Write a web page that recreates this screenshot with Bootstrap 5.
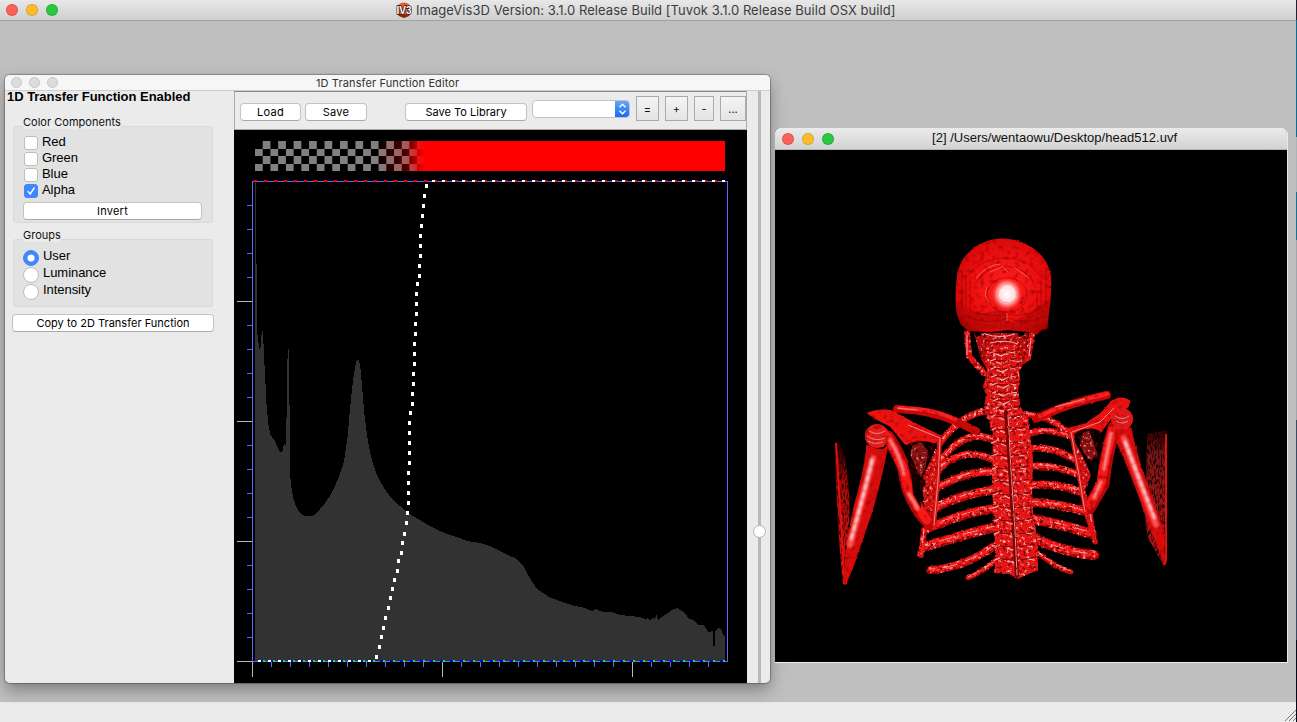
<!DOCTYPE html>
<html lang="en">
<head>
<meta charset="utf-8">
<title>ImageVis3D</title>
<link href="https://cdn.jsdelivr.net/npm/bootstrap@5.3.0/dist/css/bootstrap.min.css" rel="stylesheet">
<style>
body{height:722px;overflow:hidden;background:#bfbfbf;color:#111;font-family:Inter,sans-serif;font-size:11px;line-height:14px;cursor:default}
svg{display:block}
.appbar{height:21px;background:linear-gradient(#e8e8e8,#cfcfcf);border-bottom:1px solid #a2a2a2;padding-left:6px;font-size:13px;color:#3c3c3c}
.apptitle{left:396px;top:2px;line-height:17px;white-space:nowrap}
.apptitle span{letter-spacing:.05px}
.lamps i{display:block;width:12px;height:12px;border-radius:50%;border:1px solid #0002}
.lamps i:nth-child(1){background:#fe5f57}.lamps i:nth-child(2){background:#febc2e}.lamps i:nth-child(3){background:#28c840}
.lamps{gap:8px}
.lamps.off{gap:7px}
.lamps.off i{width:11px;height:11px;background:#dcdcdc;border-color:#c5c5c5}
.desk{height:681px}
.editor{left:5px;top:54px;width:765px;height:608px;border-radius:5px;overflow:hidden;background:#ebebeb}
.shade{left:5px;top:54px;width:765px;height:608px;border-radius:5px;box-shadow:0 0 1px 1px #0004,0 7px 16px #0005}
.edbar{height:16px;background:#f6f6f6;border-bottom:1px solid #cdcdcd;padding-left:6px}
.edbar b{left:311px;top:1px;font-weight:400;color:#333;letter-spacing:.12px}
.side{width:229px;padding:0 21px 0 8px}
.heavy{font:bold 13px/13px "Liberation Sans",sans-serif;margin:-1px 0 1px -6px;letter-spacing:-.03px;white-space:nowrap;color:#000}
.legend-txt{margin-left:10px;letter-spacing:.02px;line-height:15px;height:11px;position:relative;z-index:1}
.legend-txt span{background:#ebebeb}
.groupbox{background:#e2e2e2;border:1px solid #d9d9d9;border-radius:3px;padding:0 11px 0 10px}
.opt{height:16px;font:13px/15px "Liberation Sans",sans-serif;gap:4px;letter-spacing:-.05px;color:#000}
.opt.r{height:17px}
.opt label{position:relative;top:-2px}
.form-check-input{margin:0;width:14px;height:14px;border:1px solid #bdbdbd;background-color:#fff;flex:none}
.form-check-input[type=checkbox]{border-radius:3px}
.form-check-input[type=radio]{width:16px;height:16px}
.form-check-input:checked{background-color:#3f87fd;border-color:#3f87fd}
.form-check-input:checked[type=checkbox]{background-image:url("data:image/svg+xml,%3Csvg xmlns='http://www.w3.org/2000/svg' viewBox='0 0 14 14'%3E%3Cpath d='M3.500 7.500l2.500 3 4.700-7' fill='none' stroke='%23fff' stroke-width='1.600' stroke-linecap='round'/%3E%3C/svg%3E")}
.mbtn{height:18px;padding:0;font-size:11px;line-height:16px;background:#fff;border:1px solid #c3c3c3;border-bottom-color:#aaa;border-radius:4px;color:#000;letter-spacing:.24px}
.mbtn.tight{letter-spacing:.02px}
.tools{height:39px;border:1px solid #aaa;border-top:1px solid #8a8a8a;padding-left:5px}
.tbtn{height:25px;padding:0;font-size:11px;line-height:22px;background:linear-gradient(#f4f4f4,#e4e4e4);border:1px solid #aaa;border-radius:0;color:#111}
.combo{width:98px;height:18px;background:#fff;border:1px solid #c3c3c3;border-radius:4px;overflow:hidden}
.combo svg{margin:-1px -1px 0 0}
.canvasbox{width:513px}
.track{width:3px;background:#b9b9b9;margin-left:11px}
.knob{left:-5px;top:434px;width:13px;height:13px;border-radius:50%;background:#fff;border:1px solid #b4b4b4}
.viewer{left:775px;top:107px;width:513px;height:535px;background:#000;border-radius:5px 5px 0 0;overflow:hidden;border-right:1px solid #e8e8e8;border-bottom:1px solid #eee}
.vbar{height:22px;background:linear-gradient(#ebebeb,#d3d3d3);border-bottom:1px solid #b5b5b5;padding-left:7px}
.vbar b{left:157px;top:2px;font:13px/15px "Liberation Sans",sans-serif;color:#111;letter-spacing:.02px;white-space:nowrap}
.foot{height:20px;background:#ebebeb}
.edge{right:0;top:0;width:1px;height:722px;background:linear-gradient(#223 0 20px,#0d6c92 20px 137px,#a8b4b8 137px 192px,#15718f 192px 240px,#a0a8ac 240px 420px,#3a4a60 420px 640px,#050a1a 640px)}
</style>
</head>
<body class="d-flex flex-column position-relative">
<header class="appbar d-flex align-items-center position-relative flex-shrink-0">
  <div class="lamps d-flex"><i></i><i></i><i></i></div>
  <div class="apptitle position-absolute d-flex gap-1">
    <svg width="16" height="16" viewBox="0 0 16 16"><circle cx="8" cy="8" r="7.6" fill="#e0602a"/><path d="M1 10q7 5 14 0l-2 4-5 2-5-2z" fill="#8b2412"/><text x="8" y="11.500" text-anchor="middle" font-family="Liberation Sans" font-weight="bold" font-size="11" textLength="15" lengthAdjust="spacingAndGlyphs" fill="#fff" stroke="#311" stroke-width="1.400" paint-order="stroke">IV3</text></svg>
    <span>ImageVis3D Version: 3.1.0 Release Build [Tuvok 3.1.0 Release Build OSX build]</span>
  </div>
</header>
<main class="desk position-relative flex-shrink-0">
  <div class="shade position-absolute"></div>
  <section class="editor position-absolute d-flex flex-column">
    <div class="edbar d-flex align-items-center position-relative flex-shrink-0">
      <div class="lamps off d-flex"><i></i><i></i><i></i></div><b class="position-absolute">1D Transfer Function Editor</b>
    </div>
    <div class="d-flex flex-grow-1">
      <aside class="side d-flex flex-column flex-shrink-0">
        <div class="heavy">1D Transfer Function Enabled</div>
        <div class="legend-txt" style="margin-top:11px"><span>Color Components</span></div>
        <div class="groupbox" style="height:97px;padding-top:8px">
          <div class="opt d-flex align-items-center"><input class="form-check-input" type="checkbox" id="r"><label for="r">Red</label></div>
          <div class="opt d-flex align-items-center"><input class="form-check-input" type="checkbox" id="g"><label for="g">Green</label></div>
          <div class="opt d-flex align-items-center"><input class="form-check-input" type="checkbox" id="b"><label for="b">Blue</label></div>
          <div class="opt d-flex align-items-center"><input class="form-check-input" type="checkbox" id="a" checked><label for="a">Alpha</label></div>
          <button class="mbtn btn d-block" style="width:179px;margin:3px 0 0 -1px">Invert</button>
        </div>
        <div class="legend-txt" style="margin-top:5px"><span>Groups</span></div>
        <div class="groupbox" style="height:68px;padding-top:9px;padding-left:9px">
          <div class="opt r d-flex align-items-center"><input class="form-check-input" type="radio" name="grp" id="u" checked><label for="u">User</label></div>
          <div class="opt r d-flex align-items-center"><input class="form-check-input" type="radio" name="grp" id="l"><label for="l">Luminance</label></div>
          <div class="opt r d-flex align-items-center"><input class="form-check-input" type="radio" name="grp" id="i"><label for="i">Intensity</label></div>
        </div>
        <button class="mbtn tight btn" style="margin:7px -1px 0 -1px">Copy to 2D Transfer Function</button>
      </aside>
      <div class="canvasbox flex-shrink-0">
        <div class="tools d-flex align-items-start">
          <button class="mbtn btn" style="width:61px;margin-top:11px">Load</button>
          <button class="mbtn btn" style="width:62px;margin:11px 0 0 4px">Save</button>
          <button class="mbtn tight btn" style="width:122px;margin:11px 0 0 38px">Save To Library</button>
          <div class="combo d-flex justify-content-end" style="margin:8px 0 0 5px"><svg width="15" height="18" viewBox="0 0 15 18"><defs><linearGradient id="cb" x2="0" y2="1"><stop stop-color="#6aaafa"/><stop offset="1" stop-color="#1566f7"/></linearGradient></defs><path d="M0 0h15v18H0z" fill="url(#cb)"/><path d="M4.500 7.200l3-3 3 3M4.500 10.800l3 3 3-3" fill="none" stroke="#fff" stroke-width="1.400"/></svg></div>
          <button class="tbtn btn" style="width:23px;margin:4px 0 0 6px">=</button>
          <button class="tbtn btn" style="width:23px;margin:4px 0 0 6px">+</button>
          <button class="tbtn btn" style="width:20px;margin:4px 0 0 6px">-</button>
          <button class="tbtn btn" style="width:26px;margin:4px 0 0 6px">...</button>
        </div>
        <svg width="513" height="553" viewBox="234 130 513 553" shape-rendering="crispEdges">
          <defs>
            <pattern id="chk" x="255" y="141" width="15.450" height="15" patternUnits="userSpaceOnUse"><path d="M7.800 0h7.650v7.800H7.800zM0 7.800h7.800V15H0z" fill="#808080"/></pattern>
            <linearGradient id="ramp" gradientUnits="userSpaceOnUse" x1="375" x2="427" y1="0" y2="0"><stop stop-color="#f00" stop-opacity="0"/><stop offset=".6" stop-color="#f00" stop-opacity=".3"/><stop offset=".78" stop-color="#f00" stop-opacity=".7"/><stop offset=".88" stop-color="#f00" stop-opacity=".92"/><stop offset="1" stop-color="#f00"/></linearGradient>
          </defs>
          <path d="M234 130h513v553H234z"/>
          <path d="M255 141h470v30H255z" fill="url(#chk)"/>
          <path d="M375 141h350v30H375z" fill="url(#ramp)"/>
          <path fill="#323232" d="M255 661V181h1v83h1v71h1v8h1v6h1v-2h1v-12h1v-4h1v13h1v21h1v19h1v20h1v11h1v10h1l1 10 2 2 3 4 3 7 3 5 2-3 1-8 1 3h1v-27h1v-59h1v-10h1v56h1v69l1 10 1 8 2 9 3 7 3 5 5 3h5l5-1 5-6 5-6 5-7 5-10 5-12 4-13 2-13 2-15 1-14 1-10 1-10 1-10 1-8 1-7 1-6 1-5 1-3 1-1 1 2 1 3 1 10 1 11 1 13 1 12 1 9 1 8 2 15 3 14 3 11 3 8 4 8 5 8 6 8 8 7 8 7 7 4 5 3 10 6 10 5 10 4 10 3 7 3 13 2 10 3 10 5 8 4 7 3 5 4 4 5 4 8 5 8 5 7 7 4 3 3 7 2 7 3 13 4 10 2 7 3 4-2 7 3h9l8 3 10 1 10 1 5 2 3-1 2 3 3-4 2 3 1-5h1l1 5 4-3 6-4 4-3 5-2 5 3 4 3 3 5 5 1 4 5h6l4 7 5-1v15h2v-15l4-3 3 2 1 5 2 2v24z"/>
          <path d="M252.500 181.500H727.500V661.500H252.500z" fill="none" stroke="#6464ff"/>
          <g id="ticks" fill="none"></g>
          <g fill="none" stroke-width="2">
            <path d="M254 181H725" stroke="#f00" stroke-dasharray="3 7"/>
            <path d="M432 181H725" stroke="#fff" stroke-dasharray="3 7"/>
            <path d="M262 661H725" stroke="#0f0" stroke-dasharray="3 7"/>
            <path d="M260 661H725" stroke="#00f" stroke-dasharray="3 7"/>
            <path d="M258 661H375" stroke="#fff" stroke-dasharray="3 7"/>
          </g>
          <path id="curve" fill="none" stroke="#fff" stroke-width="3"/>
        </svg>
      </div>
      <div class="track position-relative"><div class="knob position-absolute"></div></div>
    </div>
  </section>
  <section class="viewer position-absolute">
    <div class="vbar d-flex align-items-center position-relative"><div class="lamps d-flex"><i></i><i></i><i></i></div><b class="position-absolute">[2] /Users/wentaowu/Desktop/head512.uvf</b></div>
    <svg width="512" height="512" viewBox="775 150 512 512">
      <defs>
        <filter id="bone" x="775" y="150" width="512" height="512" filterUnits="userSpaceOnUse" color-interpolation-filters="sRGB">
          <feTurbulence type="fractalNoise" baseFrequency=".3" numOctaves="3" seed="4" result="n"/>
          <feColorMatrix in="n" values="0 0 0 0 1  0 0 0 0 .7  0 0 0 0 .7  4 0 0 0 -2.300" result="w"/>
          <feComposite in="w" in2="SourceGraphic" operator="in" result="ws"/>
          <feColorMatrix in="n" values="0 0 0 0 .3  0 0 0 0 0  0 0 0 0 0  0 4 0 0 -2.250" result="k"/>
          <feComposite in="k" in2="SourceGraphic" operator="in" result="ks"/>
          <feDisplacementMap in="SourceGraphic" in2="n" scale="3" xChannelSelector="R" yChannelSelector="G" result="d"/>
          <feMerge><feMergeNode in="d"/><feMergeNode in="ks"/><feMergeNode in="ws"/></feMerge>
        </filter>
        <filter id="smooth" x="775" y="150" width="512" height="512" filterUnits="userSpaceOnUse" color-interpolation-filters="sRGB">
          <feTurbulence type="fractalNoise" baseFrequency=".2" numOctaves="2" seed="9" result="n"/>
          <feColorMatrix in="n" values="0 0 0 0 .6  0 0 0 0 0  0 0 0 0 0  0 2 0 0 -1" result="k"/>
          <feComposite in="k" in2="SourceGraphic" operator="in" result="ks"/>
          <feDisplacementMap in="SourceGraphic" in2="n" scale="2" xChannelSelector="R" yChannelSelector="G" result="d"/>
          <feMerge><feMergeNode in="d"/><feMergeNode in="ks"/></feMerge>
        </filter>
        <filter id="grain" x="775" y="150" width="512" height="512" filterUnits="userSpaceOnUse" color-interpolation-filters="sRGB">
          <feTurbulence type="fractalNoise" baseFrequency=".7 .2" numOctaves="2" seed="2" result="n"/>
          <feColorMatrix in="n" values="0 0 0 0 0  0 0 0 0 0  0 0 0 0 0  0 3 0 0 -1.300" result="k"/>
          <feComposite in="k" in2="SourceGraphic" operator="in" result="ks"/>
          <feMerge><feMergeNode in="SourceGraphic"/><feMergeNode in="ks"/></feMerge>
        </filter>
        <filter id="soft" x="775" y="150" width="512" height="512" filterUnits="userSpaceOnUse"><feGaussianBlur stdDeviation=".8"/></filter>
        <radialGradient id="skull" cx=".52" cy=".5" r=".62"><stop stop-color="#ff2020"/><stop offset=".55" stop-color="#ee1010"/><stop offset=".85" stop-color="#d80808"/><stop offset="1" stop-color="#8c0000"/></radialGradient>
        <radialGradient id="glow"><stop stop-color="#fff"/><stop offset=".5" stop-color="#ffdcdc"/><stop offset=".75" stop-color="#f66" stop-opacity=".8"/><stop offset="1" stop-color="#f11" stop-opacity="0"/></radialGradient>
        <linearGradient id="fadeL" x2="0" y2="1"><stop stop-color="#200"/><stop offset=".3" stop-color="#a80808"/><stop offset="1" stop-color="#f01515"/></linearGradient>
        <linearGradient id="fadeR" x2="0" y2="1"><stop stop-color="#300"/><stop offset=".2" stop-color="#801616"/><stop offset="1" stop-color="#c01818"/></linearGradient>
      </defs>
      <path d="M834.500 441L842 446Q849 470 849.500 510L847 584H843Q837 530 834.500 441z" fill="url(#fadeL)" filter="url(#grain)"/>
      <path d="M1147 434L1166.500 430V562L1164 566L1149 540L1145.500 526z" fill="url(#fadeR)" filter="url(#grain)"/>
      <path d="M836 443L841.500 530 844.500 583M1166 434V560L1164.500 565" fill="none" stroke="#e01010" stroke-width="2"/>
      <g filter="url(#bone)" fill="none" stroke-linecap="round">
        <g id="ribs"></g>
        <path d="M967 333L969 356 984 373M1032 334L1028 357 1018 365" stroke="#e01010" stroke-width="6"/>
        <path d="M974 333h54l-4 30-6 10h-29l-8-14z" fill="#b80a0a"/>
        <path d="M986 345L987 372 983 387 986 395 984 407 990 412 1018 412 1020 402 1018 390 1020 378 1017 345z" fill="#e01212"/>
        <path d="M984 408h37l7 10 5 40-1 45 5 35 1 32-12 5-8 4-9-5-14-1v-30l-3-60 1-50z" fill="#e61414"/>
      </g>
      <g fill="none" stroke-linecap="round" filter="url(#smooth)">
        <g id="verts"></g>
        <path d="M1006 412L1010 470 1014 530 1017 576" stroke="#780000" stroke-width="4"/>
        <path d="M1008 415L1011 470 1015 530 1017 575" stroke="#e89090" stroke-width="1"/>
      </g>
      <path d="M940 440Q925 470 922 480L924 510 936 527 938 475zM1071 435L1082 455 1091 475 1085 490 1092 510 1084 514z" fill="#d01010" filter="url(#bone)"/>
      <g filter="url(#smooth)" fill="none" stroke-linecap="round" stroke-linejoin="round">
        <path d="M888 437Q897 451 904 468 906 492 920 512L930 524" stroke="#b80808" stroke-width="13"/>
        <path d="M888 437Q897 455 904 470 907 495 927 520" stroke="#f81818" stroke-width="9"/>
        <path d="M1114 428Q1106 455 1103 484L1089 508" stroke="#b80808" stroke-width="13"/>
        <path d="M1113 430Q1105 455 1101 484L1090 505" stroke="#f81818" stroke-width="9"/>
        <path d="M897 409Q930 410 955 421L976 431" stroke="#c80909" stroke-width="8"/>
        <path d="M900 408Q930 408 955 419" stroke="#ff2222" stroke-width="4"/>
        <path d="M1036 419Q1065 404 1107 395" stroke="#c80909" stroke-width="8"/>
        <path d="M1040 416Q1068 402 1107 394" stroke="#ff2222" stroke-width="4"/>
        <path d="M868 413Q880 408 892 411L914 423 943 437 930 446 905 444 890 426 872 417z" fill="#ec1212" stroke="#f51616" stroke-width="1"/>
        <path d="M1066 429L1085 424 1100 414 1112 401Q1122 395 1130 401L1128 407 1114 414 1101 432 1071 435z" fill="#ec1212" stroke="#f51616" stroke-width="1"/>
        <path d="M940 438L938 480 934 528M1071 432L1079 475 1086 514 1096 542" stroke="#e01414" stroke-width="4"/>
        <path d="M867 446Q884 454 887 446 881 480 870 516L852 568 845 584Q844 555 855 505 864 475 867 450z" fill="#d80c0c" stroke="#d80c0c" stroke-width="2"/>
        <path d="M1116 428L1131 428Q1135 453 1153 500L1164 535 1164 562 1148 522Q1131 472 1116 440z" fill="#d80c0c" stroke="#d80c0c"/>
        <circle cx="877" cy="436" r="12" fill="#e81c1c"/><circle cx="1122" cy="419" r="11" fill="#e01a1a"/>
      </g>
      <path d="M867 436q8 6 18 2M869 431q8 5 16 0M868 441q7 4 15 1M1115 416q7 5 14 0M1116 421q6 4 12 0" fill="none" stroke="#d88" stroke-width="1"/>
      <g fill="#080000" filter="url(#smooth)"><path d="M908 444Q922 438 936 444L930 462 922 476 926 484 921 490 921 508 913 494 912 480 908 464z"/><path d="M1074 434Q1088 425 1100 431L1099 456 1091 466 1082 454z"/></g>
      <path d="M912 446l8-4 8 8-3 18-4 10-6-12-4-10zM1081 434l8-3 4 10 4 12-6 8-7-8-4-8z" fill="#8b1010" filter="url(#bone)"/>
      <g fill="none" stroke-linecap="round" filter="url(#soft)">
        <path d="M873 458Q863 498 850 545M1124 438Q1138 478 1156 525" stroke="#ff5050" stroke-width="6"/>
        <path d="M872 460Q863 498 850 542M1125 442Q1139 478 1156 521" stroke="#ffd8d8" stroke-width="2.500" stroke-dasharray="5 3.500"/>
        <path d="M890 440Q902 460 904 476M909 494l10 17M1111 433l-7 36M1101 482l-8 18" stroke="#ffa0a0" stroke-width="3" stroke-dasharray="1 3"/>
      </g>
      <path d="M940 438L938 480 934 525M1071 432L1079 475 1085 512M908 425L940 438M1072 432L1100 422 1114 408M897 408l20 2M1055 407l30-8" fill="none" stroke="#f08888" stroke-width="1"/>
      <g filter="url(#smooth)">
        <path d="M1002 238.500C978 239 959 256 957 276Q954 300 957 315L961 325 969 331 991 332 1008 330 1030 332 1037 335 1041 330 1047 329 1049 312Q1052 294 1051 276C1047 252 1025 239 1002 238.500z" fill="url(#skull)"/>
        <path d="M957 303Q972 316 990 312T1007 318 1030 312 1050 300L1048 328 1037 333 1008 329 970 330 960 323z" fill="#a00404" opacity=".45"/>
      </g>
      <g fill="none" stroke="#8d0000" stroke-width="1" opacity=".55">
        <path d="M959 303Q980 319 1005 315 1035 318 1049 302M965 316Q990 326 1008 318 1025 326 1045 316M968 275Q982 258 1005 258 1030 257 1043 280M975 284Q985 267 1005 266 1028 267 1036 288M962 270v38M966 274v34M970 280v30M1046 270v38M1041 280v28M1037 290v20"/>
        <ellipse cx="1007" cy="295" rx="20" ry="17"/>
      </g>
      <path d="M976 278Q987 265 1000 264M990 272l14-6M1014 267l15 11M1004 268l4 4M1007 313v8M987 287q-4 9 2 15" fill="none" stroke="#ff6666" stroke-width="1" opacity=".8"/>
      <ellipse cx="1007" cy="294" rx="16" ry="17" fill="url(#glow)"/>
      <path d="M999 290l5-5 7-1 5 6 1 8-7 5-7-1-5-5z" fill="none" stroke="#f99" stroke-width="1"/>
      <path d="M975 333l5-1 1 4-5 1zM1018 333l6-1v3l-5 2z"/>
      <path d="M967 335v20M1031 338l-2 18M985 334q15 5 30 0M990 343q15-4 28 1" fill="none" stroke="#ffaaaa" stroke-width="1"/>
    </svg>
  </section>
</main>
<footer class="foot d-flex justify-content-end align-items-end flex-shrink-0"><svg width="13" height="13" viewBox="0 0 13 13" fill="none" stroke="#777"><path d="M1 12L12 1M5 12l7-7M9 12l3-3"/></svg></footer>
<div class="edge position-absolute"></div>
<script src="https://cdn.jsdelivr.net/npm/bootstrap@5.3.0/dist/js/bootstrap.bundle.min.js"></script>
<script>
// axis ticks
let minor='',major='';
for(let k=1;k<=20;k++){const y=181.5+24*k; if(k%5) minor+=`M247 ${y}h5`; else major+=`M237 ${y}h15`;}
for(let k=0;k<25;k++){const x=252.5+19*k; if(k%10) minor+=`M${x} 662v5`; else major+=`M${x} 662v15`;}
document.getElementById('ticks').innerHTML=`<path d="${minor}" stroke="#6464ff"/><path d="${major}" stroke="#b9b9b9"/>`;
// transfer curve samples
const pts=[[376.5,657],[379.5,647],[381.5,637],[383.5,628],[385.5,618],[388.5,608],[390.5,598],[392,589],[394.5,580],[397.5,571],[398.5,561],[401.5,553],[402.5,543],[404.5,534],[406.5,523],[407.5,513],[408,503],[408.5,493],[408.5,483],[408.5,473],[409,463],[409,453],[409,443],[409.5,433],[409.5,423],[410,413],[412,404],[412.5,394],[413,384],[413.5,374],[414,364],[414.5,354],[414.5,344],[415,334],[415.5,324],[416,314],[416.5,304],[416.5,294],[417,284],[419,276],[419.5,266],[420,256],[420,246],[420.5,236],[421,226],[422,216],[423.5,206],[424.5,196],[426.5,186]];
document.getElementById('curve').setAttribute('d',pts.map(p=>`M${p[0]} ${p[1]-2}v3.500`).join(''));
// ribs: start, control point, end, width
const ribs=[[992,411,964,410,940,443,7],[993,440,963,425,934,470,7],[993,460,960,443,933,476,7],[994,472,965,470,930,492,8],[996,490,965,492,926,512,9],[998,508,965,512,928,528,9],[999,526,965,534,924,547,10],[997,544,965,568,930,570,8],[995,561,984,571,968,578,5],
[924,530,923,540,921,555,6],
[1018,414,1052,414,1072,437,6],[1018,440,1040,424,1068,436,6],[1018,453,1045,441,1073,459,7],[1020,468,1047,462,1077,474,7],[1022,487,1048,480,1081,492,8],[1024,503,1050,501,1083,511,9],[1028,519,1055,522,1092,534,10],[1030,536,1060,552,1094,555,10],[1038,553,1055,567,1071,572,5],[1090,510,1091,525,1095,542,5]];
document.getElementById('ribs').innerHTML=ribs.map(r=>{const d=`M${r[0]} ${r[1]}Q${r[2]} ${r[3]} ${r[4]} ${r[5]}`;return `<path d="${d}" stroke="#b00808" stroke-width="${r[6]}"/><path d="${d}" transform="translate(0 -.8)" stroke="#f81818" stroke-width="${r[6]*.65}"/><path d="${d}" transform="translate(0 -1)" stroke="#ff9a9a" stroke-width="1" stroke-dasharray="14 9"/>`}).join('');
// vertebra edges
let v='';
for(let y=350,k=0;y<568;y+=y<410?8:13,k++){const c=1002+(y-350)*.06,w=y<410?14:17+(y-410)*.03;
v+=`<path d="M${c-w} ${y}q${w} 6 ${2*w} 0" stroke="#7c0000" stroke-width="1.200"/><path d="M${c-w+2} ${y+3}l5 -2M${c-6} ${y+4}l5 2 6-3M${c+w-7} ${y+2}l5 1" stroke="#ffb4b4" stroke-width="1.200"/>`;}
document.getElementById('verts').innerHTML=v;
</script>
</body>
</html>
